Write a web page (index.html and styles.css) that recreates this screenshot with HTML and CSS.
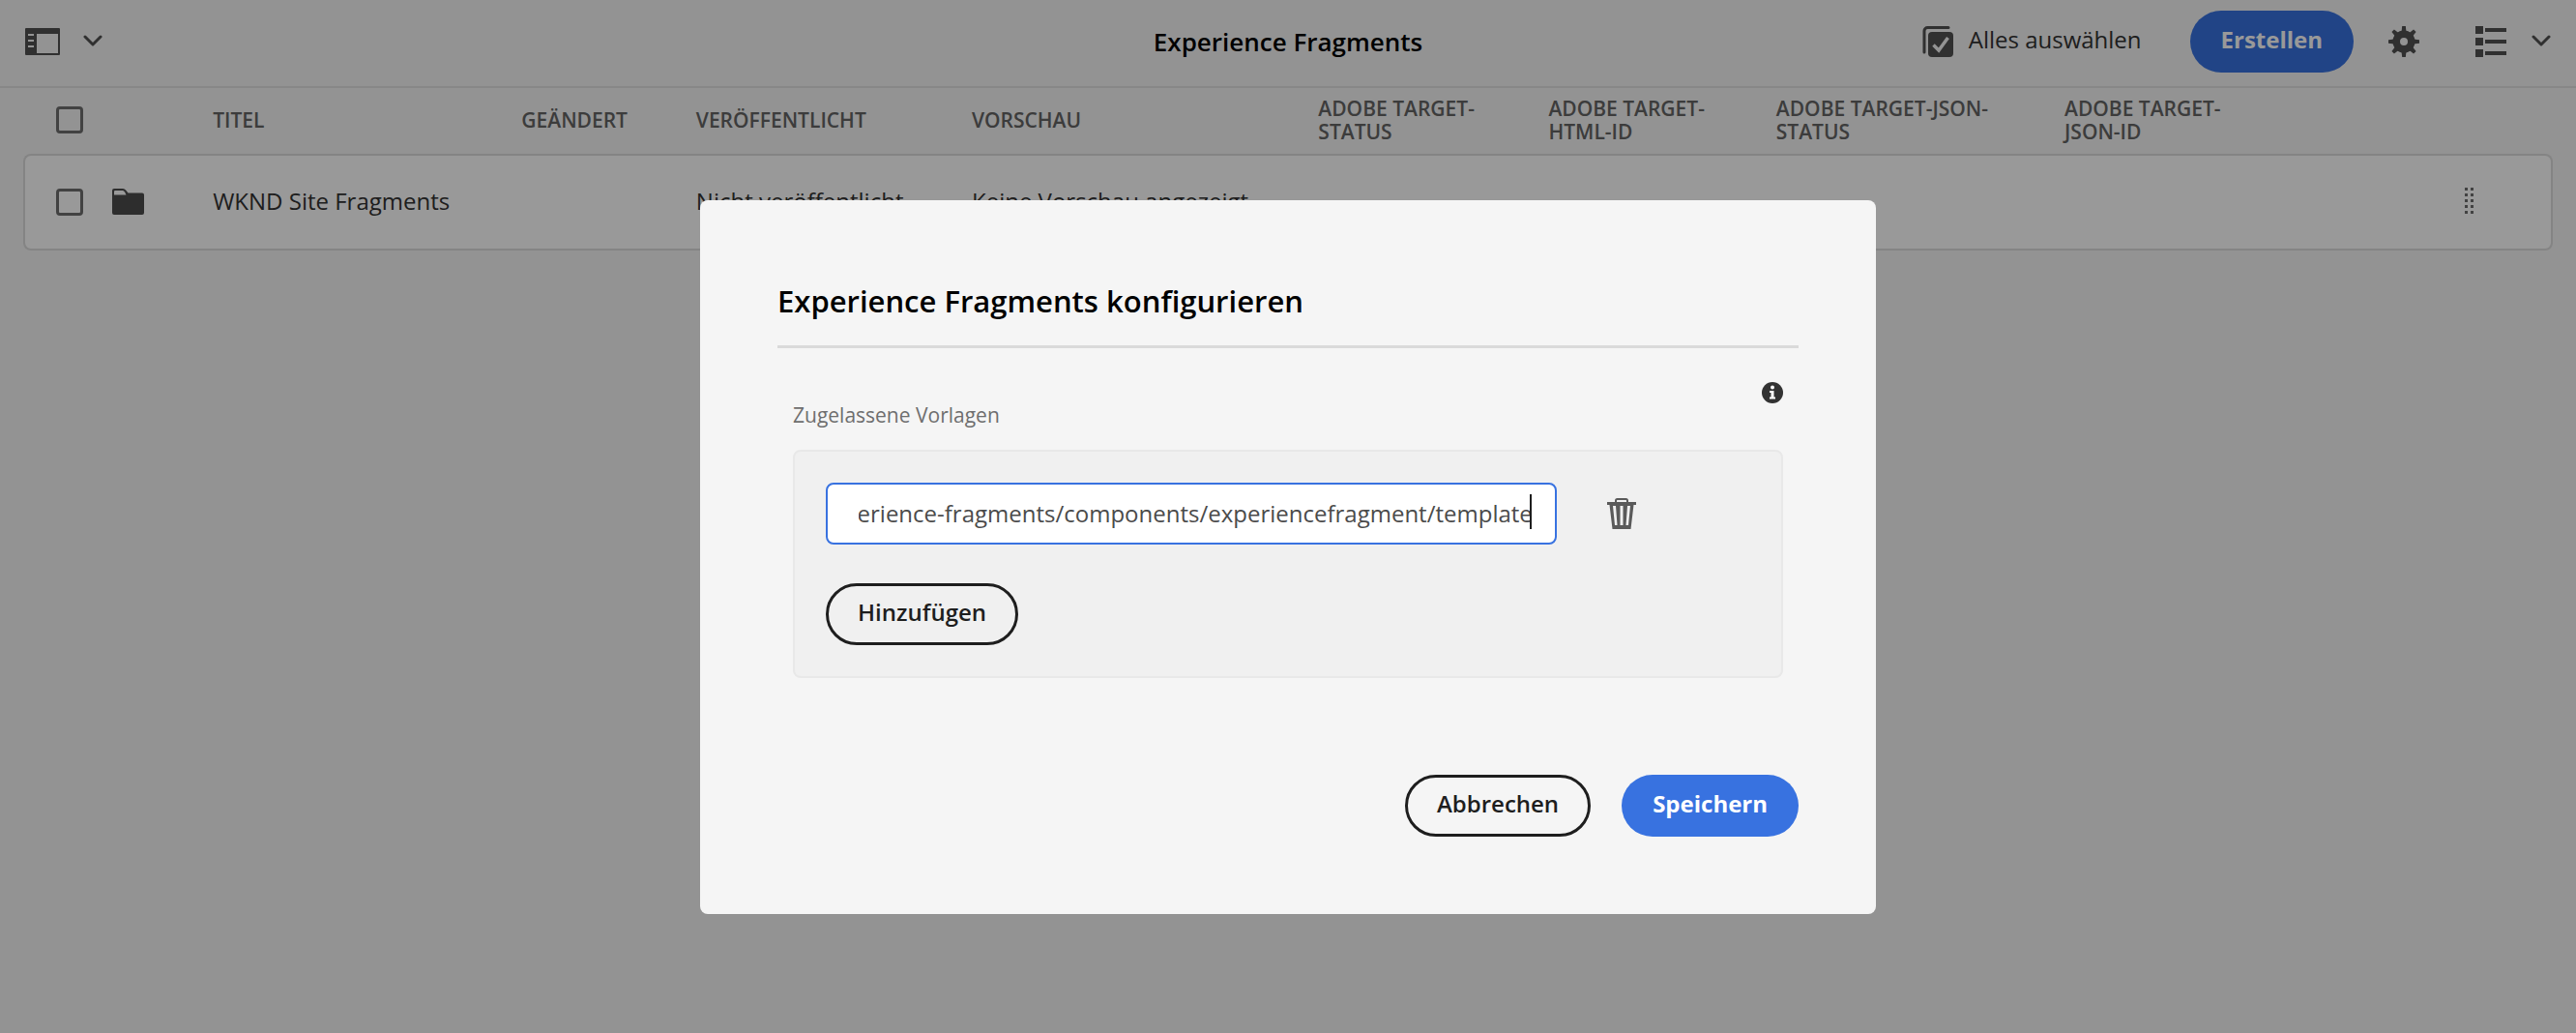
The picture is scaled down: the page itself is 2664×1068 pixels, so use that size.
FILE: index.html
```html
<!DOCTYPE html>
<html lang="de">
<head>
<meta charset="utf-8">
<meta name="viewport" content="width=device-width, initial-scale=1">
<title>Experience Fragments</title>
<link rel="stylesheet" href="styles.css">
</head>
<body>
<div class="shell">
  <header class="toolbar">
    <div class="toolbar-side">
      <button class="icon-button rail-toggle" type="button" aria-label="Seitenleiste">
        <svg width="36" height="28" viewBox="0 0 36 28" fill="currentColor"><path fill-rule="evenodd" d="M1 0h34a1 1 0 0 1 1 1v26a1 1 0 0 1-1 1H1a1 1 0 0 1-1-1V1a1 1 0 0 1 1-1zM12 6v20h22V6zM3 6v2h6V6zM3 12v2h6v-2zM3 18v2h6v-2z"/></svg>
        <svg width="20" height="13" viewBox="0 0 20 13" fill="none" stroke="currentColor" stroke-width="3" stroke-linecap="round" stroke-linejoin="round"><path d="M2 2l8 8 8-8"/></svg>
      </button>
    </div>
    <h1 class="toolbar-title">Experience Fragments</h1>
    <div class="toolbar-side toolbar-actions">
      <button class="icon-button select-all" type="button">
        <svg width="32" height="32" viewBox="0 0 32 32"><path d="M2 27V5a3.500 3.500 0 0 1 3.500-3.500H27" fill="none" stroke="currentColor" stroke-width="3" stroke-linecap="round"/><rect x="6" y="6" width="26" height="26" rx="4" fill="currentColor"/><path d="M11.500 19.500l5.500 5.500 9.500-13" fill="none" stroke="#f5f5f5" stroke-width="3.500"/></svg>
        <span>Alles auswählen</span>
      </button>
      <button class="button button-primary" type="button">Erstellen</button>
      <button class="icon-button" type="button" aria-label="Einstellungen">
        <svg width="32" height="32" viewBox="-16 -16 32 32" fill="currentColor"><path fill-rule="evenodd" d="M0-11.500a11.500 11.500 0 1 0 0 23a11.500 11.500 0 1 0 0-23zM0-4a4 4 0 1 1 0 8a4 4 0 1 1 0-8z"/><path id="tooth" d="M-2.500-10l.7-6h3.600l.7 6z"/><use href="#tooth" transform="rotate(45)"/><use href="#tooth" transform="rotate(90)"/><use href="#tooth" transform="rotate(135)"/><use href="#tooth" transform="rotate(180)"/><use href="#tooth" transform="rotate(225)"/><use href="#tooth" transform="rotate(270)"/><use href="#tooth" transform="rotate(315)"/></svg>
      </button>
      <button class="icon-button view-switch" type="button" aria-label="Listenansicht">
        <svg width="32" height="32" viewBox="0 0 32 32" fill="currentColor"><path d="M0 0h8v8H0zM10 2h22v4H10zM0 12h8v8H0zM10 14h22v4H10zM0 24h8v8H0zM10 26h22v4H10z"/></svg>
        <svg width="20" height="13" viewBox="0 0 20 13" fill="none" stroke="currentColor" stroke-width="3" stroke-linecap="round" stroke-linejoin="round"><path d="M2 2l8 8 8-8"/></svg>
      </button>
    </div>
  </header>

  <main class="content">
    <table class="list">
      <colgroup>
        <col class="col-select"><col class="col-icon"><col class="col-title"><col class="col-modified"><col class="col-published"><col class="col-preview"><col class="col-status"><col class="col-html"><col class="col-json-status"><col class="col-json-id"><col class="col-handle">
      </colgroup>
      <thead>
        <tr>
          <th class="cell-select"><input class="checkbox" type="checkbox" aria-label="Alle auswählen"></th>
          <th></th>
          <th scope="col">Titel</th>
          <th scope="col">Geändert</th>
          <th scope="col">Veröffentlicht</th>
          <th scope="col">Vorschau</th>
          <th scope="col">Adobe Target-<br>Status</th>
          <th scope="col">Adobe Target-<br>HTML-ID</th>
          <th scope="col">Adobe Target-JSON-<br>Status</th>
          <th scope="col">Adobe Target-<br>JSON-ID</th>
          <th></th>
        </tr>
      </thead>
      <tbody>
        <tr>
          <td class="cell-select"><input class="checkbox" type="checkbox" aria-label="WKND Site Fragments auswählen"></td>
          <td><svg class="folder" width="33" height="27" viewBox="0 0 33 27"><path d="M0 8V2a2 2 0 0 1 2-2h9q2 0 3 1.500L16.500 4.500H31a2 2 0 0 1 2 2V25a2 2 0 0 1-2 2H2a2 2 0 0 1-2-2z" fill="currentColor"/><path d="M2 6.500V3a1 1 0 0 1 1-1h8q1 0 2 1.500l1.500 3z" fill="#fff"/></svg></td>
          <td>WKND Site Fragments</td>
          <td></td>
          <td>Nicht veröffentlicht</td>
          <td>Keine Vorschau angezeigt</td>
          <td></td>
          <td></td>
          <td></td>
          <td></td>
          <td class="cell-handle"><svg class="handle" width="10" height="28" viewBox="0 0 10 28" fill="currentColor"><path d="M0 0h3v3H0zM6 0h3v3H6zM0 6h3v3H0zM6 6h3v3H6zM0 12h3v3H0zM6 12h3v3H6zM0 18h3v3H0zM6 18h3v3H6zM0 24h3v3H0zM6 24h3v3H6z"/></svg></td>
        </tr>
      </tbody>
    </table>
  </main>
</div>

<div class="backdrop">
  <form class="dialog" role="dialog" aria-modal="true" aria-labelledby="dialog-title">
    <h2 class="dialog-title" id="dialog-title">Experience Fragments konfigurieren</h2>
    <div class="dialog-body">
      <div class="field-head">
        <label class="field-label" for="template">Zugelassene Vorlagen</label>
        <button class="icon-button" type="button" aria-label="Info">
          <svg width="22" height="22" viewBox="0 0 22 22"><circle cx="11" cy="11" r="11" fill="#323232"/><circle cx="11" cy="5.500" r="2" fill="#fff"/><path d="M8 9h4.500v6.500H14v2H8v-2h1.500V11H8z" fill="#fff"/></svg>
        </button>
      </div>
      <div class="multifield">
        <div class="multifield-row">
          <div class="text-field">
            <input class="text-input" id="template" type="text" value="/libs/cq/experience-fragments/components/experiencefragment/template">
            <span class="caret"></span>
          </div>
          <button class="icon-button delete" type="button" aria-label="Löschen">
            <svg width="30" height="32" viewBox="0 0 30 32"><path d="M9 4V2.500A1.500 1.500 0 0 1 10.500 1h9A1.500 1.500 0 0 1 21 2.500V4" fill="none" stroke="currentColor" stroke-width="2"/><path fill-rule="evenodd" fill="currentColor" d="M0 4h30v3h-2.500L24.500 32h-19L2.500 7H0zM6 8l2 20h2.500L9 8zM13.500 8v20h3V8zM21 8l-1.500 20H22L24 8z"/></svg>
          </button>
        </div>
        <button class="button button-outline" type="button">Hinzufügen</button>
      </div>
    </div>
    <div class="dialog-footer">
      <button class="button button-outline" type="button">Abbrechen</button>
      <button class="button button-primary" type="submit">Speichern</button>
    </div>
  </form>
</div>
<script src="script.js"></script>
</body>
</html>
```
FILE: styles.css
```css
* {
  box-sizing: border-box;
}

body {
  margin: 0;
  background: #f5f5f5;
  color: #323232;
  font-family: "Open Sans", "Noto Sans", sans-serif;
  font-size: 24px;
  line-height: 32px;
}

button,
input {
  font: inherit;
}

svg {
  display: block;
}

.toolbar {
  display: flex;
  align-items: center;
  height: 91px;
  padding: 0 26px 4px;
  border-bottom: 2px solid #e1e1e1;
}

.toolbar-side {
  display: flex;
  flex: 1;
  align-items: center;
}

.toolbar-title {
  margin: 0;
  color: #000;
  font-size: 26px;
  font-weight: 600;
  line-height: 32px;
}

.toolbar-actions {
  justify-content: flex-end;
  gap: 36px;
}

.icon-button {
  display: flex;
  align-items: center;
  padding: 0;
  border: 0;
  background: none;
  color: #505050;
}

.rail-toggle {
  gap: 24px;
}

.select-all {
  gap: 16px;
  margin-right: 14px;
}

.select-all span {
  padding-bottom: 4px;
  color: #323232;
}

.view-switch {
  gap: 26px;
  margin-left: 22px;
}

.button {
  height: 64px;
  padding: 0 32px 4px;
  border-radius: 32px;
  font-weight: 600;
  line-height: 32px;
}

.button-primary {
  border: 0;
  background: #3872e0;
  color: #fff;
  font-weight: 700;
}

.button-outline {
  padding: 0 30px 4px;
  border: 3px solid #1e1e1e;
  background: none;
  color: #1e1e1e;
}

.content {
  padding: 0 24px;
}

.list {
  width: 100%;
  table-layout: fixed;
  border-collapse: separate;
  border-spacing: 0;
}

.list th,
.list td {
  padding: 0;
  text-align: left;
  vertical-align: middle;
  white-space: nowrap;
}

.list th {
  height: 68px;
  padding-bottom: 3px;
  color: #646464;
  font-size: 21px;
  font-weight: 600;
  line-height: 24px;
  text-transform: uppercase;
}

.list td {
  height: 100px;
  padding-bottom: 2px;
  border: solid #dcdcdc;
  border-width: 2px 0;
  background: #fff;
  color: #323232;
}

.list td:first-child {
  border-left-width: 2px;
  border-radius: 8px 0 0 8px;
}

.list td:last-child {
  border-right-width: 2px;
  border-radius: 0 8px 8px 0;
}

.list th.cell-select {
  padding-left: 34px;
}

.list td.cell-select {
  padding: 0 0 0 32px;
}

.col-select { width: 3.5%; }
.col-icon { width: 4%; }
.col-title { width: 12.2%; }
.col-modified { width: 6.9%; }
.col-published { width: 10.9%; }
.col-preview { width: 13.7%; }
.col-status { width: 9.1%; }
.col-html { width: 9%; }
.col-json-status { width: 11.4%; }
.col-json-id { width: 12.8%; }
.col-handle { width: 6.5%; }

.checkbox {
  display: block;
  width: 28px;
  height: 28px;
  margin: 0;
  border: 3px solid #6e6e6e;
  border-radius: 4px;
  appearance: none;
}

.folder {
  color: #4b4b4b;
}

.handle {
  margin: 0 auto;
  color: #6e6e6e;
}

.backdrop {
  position: fixed;
  inset: 0;
  display: flex;
  align-items: flex-start;
  justify-content: center;
  padding: 207px 24px 24px;
  overflow: auto;
  background: rgba(0, 0, 0, 0.4);
}

.dialog {
  width: 1216px;
  max-width: 100%;
  padding: 80px;
  border-radius: 8px;
  background: #f5f5f5;
}

.dialog-title {
  margin: 0;
  padding-bottom: 22px;
  border-bottom: 3px solid #dadada;
  color: #000;
  font-size: 31px;
  font-weight: 600;
  line-height: 48px;
}

.dialog-body {
  padding: 35px 16px 0;
}

.field-head {
  display: flex;
  align-items: flex-start;
  justify-content: space-between;
  margin-bottom: 22px;
}

.field-label {
  padding-top: 20px;
  color: #6e6e6e;
  font-size: 21px;
  line-height: 28px;
}

.multifield {
  display: flex;
  flex-direction: column;
  align-items: flex-start;
  gap: 40px;
  padding: 32px;
  border: 2px solid #e8e8e8;
  border-radius: 8px;
  background: #f0f0f0;
}

.multifield-row {
  display: flex;
  align-items: center;
  gap: 52px;
  width: 100%;
}

.text-field {
  position: relative;
  flex: 0 1 756px;
}

.text-input {
  display: block;
  width: 100%;
  height: 64px;
  padding: 0 23px 2px 32px;
  border: 2px solid #3872e0;
  border-radius: 8px;
  outline: 0;
  background: #fff;
  color: #4b4b4b;
  caret-color: transparent;
}

.caret {
  position: absolute;
  top: 12px;
  right: 26px;
  width: 2px;
  height: 36px;
  background: #1e1e1e;
}

.delete {
  color: #5a5a5a;
}

.dialog-footer {
  display: flex;
  justify-content: flex-end;
  gap: 32px;
  margin-top: 100px;
}
```
FILE: script.js
```js
// Put the cursor at the end of the path, so that its last segment is visible.
const field = document.getElementById("template");
field.focus();
field.setSelectionRange(field.value.length, field.value.length);
field.scrollLeft = field.scrollWidth;
```
